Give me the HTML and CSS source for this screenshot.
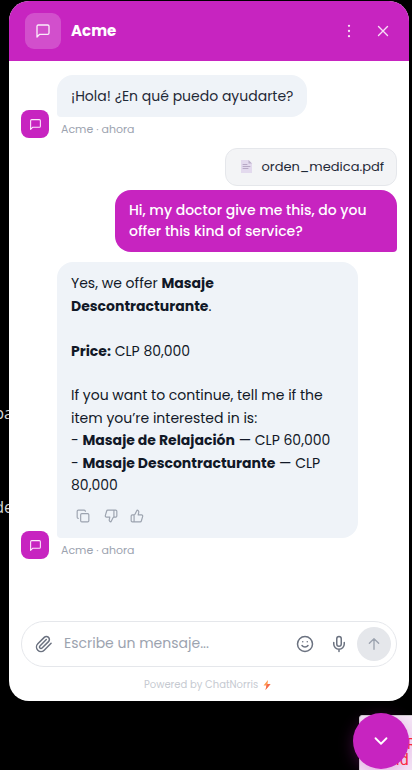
FILE: index.html
```html
<!DOCTYPE html>
<html lang="es">
<head>
<meta charset="utf-8">
<title>Acme</title>
<link rel="stylesheet" href="styles.css">
</head>
<body>
<svg class="defs"><defs>
<symbol id="chat" viewBox="0 0 24 24"><path d="M21 15a2 2 0 0 1-2 2H7l-4 4V5a2 2 0 0 1 2-2h14a2 2 0 0 1 2 2z"/></symbol>
</defs></svg>
<span class="page-text upper">pa</span>
<span class="page-text lower">de</span>
<div class="notice"><span class="n1">R</span><span class="n2">uid</span></div>
<main class="panel">
  <header>
    <div class="logo"><svg class="i16"><use href="#chat"/></svg></div>
    <h1>Acme</h1>
    <svg class="dots" viewBox="0 0 18 18"><circle cx="9" cy="3.8" r="1.15"/><circle cx="9" cy="9" r="1.15"/><circle cx="9" cy="14.2" r="1.15"/></svg>
    <svg class="close" viewBox="0 0 18 18"><path d="M4.5 4.5l9 9M13.5 4.5l-9 9"/></svg>
  </header>
  <section class="messages">
    <div class="row">
      <div class="avatar"><svg><use href="#chat"/></svg></div>
      <div class="stack">
        <div class="bubble hello">¡Hola! ¿En qué puedo ayudarte?</div>
        <div class="meta">Acme · ahora</div>
      </div>
    </div>
    <div class="file">
      <svg viewBox="0 0 12 14"><path fill="#e3daee" d="M0 0h7.5L11 3.5V13H0z"/><path fill="#bcb0ca" d="M7.5 0L11 3.5H7.5z"/><path stroke="#b7a9c5" d="M2 4.5h4M2 6.5h7M2 8.5h5"/></svg>
      <span>orden_medica.pdf</span>
    </div>
    <div class="user">Hi, my doctor give me this, do you<br>offer this kind of service?</div>
    <div class="row answer-row">
      <div class="avatar"><svg><use href="#chat"/></svg></div>
      <div class="stack">
        <div class="bubble answer">
          <p>Yes, we offer <b>Masaje</b></p>
          <p><b>Descontracturante</b>.</p>
          <p>&nbsp;</p>
          <p><b>Price:</b> CLP 80,000</p>
          <p>&nbsp;</p>
          <p>If you want to continue, tell me if the</p>
          <p>item you’re interested in is:</p>
          <p>- <b>Masaje de Relajación</b> — CLP 60,000</p>
          <p>- <b>Masaje Descontracturante</b> — CLP</p>
          <p>80,000</p>
          <div class="actions">
            <svg viewBox="0 0 24 24"><rect x="8" y="8" width="14" height="14" rx="2"/><path d="M4 16c-1.1 0-2-.9-2-2V4c0-1.1.9-2 2-2h10c1.1 0 2 .9 2 2"/></svg>
            <svg class="down" viewBox="0 0 24 24"><path d="M17 14V2M9 18.12 10 14H4.17a2 2 0 0 1-1.92-2.56l2.33-8A2 2 0 0 1 6.5 2H20a2 2 0 0 1 2 2v8a2 2 0 0 1-2 2h-2.76a2 2 0 0 0-1.79 1.11L12 22a3.13 3.13 0 0 1-3-3.88Z"/></svg>
            <svg viewBox="0 0 24 24"><path d="M7 10v12M15 5.88 14 10h5.83a2 2 0 0 1 1.92 2.56l-2.33 8A2 2 0 0 1 17.5 22H4a2 2 0 0 1-2-2v-8a2 2 0 0 1 2-2h2.76a2 2 0 0 0 1.79-1.11L12 2a3.13 3.13 0 0 1 3 3.88Z"/></svg>
          </div>
        </div>
        <div class="meta">Acme · ahora</div>
      </div>
    </div>
  </section>
  <footer>
    <div class="input">
      <svg class="clip" viewBox="0 0 24 24"><path d="m21.44 11.05-9.19 9.19a6 6 0 0 1-8.49-8.49l8.57-8.57A4 4 0 1 1 18 8.84l-8.59 8.57a2 2 0 0 1-2.83-2.83l8.49-8.48"/></svg>
      <span class="placeholder">Escribe un mensaje...</span>
      <svg class="tool smile" viewBox="0 0 24 24"><circle cx="12" cy="12" r="10"/><path d="M8 14s1.5 2 4 2 4-2 4-2M9 9h.01M15 9h.01"/></svg>
      <svg class="tool mic" viewBox="0 0 24 24"><path d="M12 2a3 3 0 0 0-3 3v7a3 3 0 0 0 6 0V5a3 3 0 0 0-3-3ZM19 10v2a7 7 0 0 1-14 0v-2M12 19v3"/></svg>
      <div class="send"><svg viewBox="0 0 24 24"><path d="M12 20V4M5 11l7-7 7 7"/></svg></div>
    </div>
    <div class="powered"><span>Powered by ChatNorris</span><svg viewBox="0 0 8 10"><path fill="#ff9a4d" d="M5 0L.5 5.5h3L2.5 10 7.5 4h-3z"/><path fill="#f4694f" d="M3.5 5.5L2.5 10 7.5 4h-3z"/></svg></div>
  </footer>
</main>
<div class="fab"><svg viewBox="0 0 24 24"><path d="m6 9 6 6 6-6"/></svg></div>
</body>
</html>
```
FILE: styles.css
```css
* { box-sizing: border-box; }
body { margin: 0; height: 770px; background: #000; overflow: hidden; position: relative; padding: 1px 3px 0 9px; font-family: Poppins, Inter, sans-serif; font-size: 14px; color: #111827; }
svg { fill: none; stroke: currentColor; stroke-width: 2; stroke-linecap: round; stroke-linejoin: round; flex: none; display: block; }
.defs { position: absolute; width: 0; height: 0; }
.page-text { position: absolute; right: 399px; color: #d8d8d8; font-family: "Open Sans", sans-serif; font-size: 16px; line-height: 24px; }
.upper { top: 401px; }
.lower { top: 495px; }
.notice { position: absolute; left: 359px; top: 715px; width: 70px; height: 60px; background: #f3e6f5; border-radius: 3px; border: 1px solid #ccc; color: #ff2a30; font: 14px Roboto, sans-serif; }
.n1, .n2 { position: absolute; line-height: 16px; }
.n1 { left: 47px; top: 20px; }
.n2 { left: 27px; top: 36px; font-size: 16px; }
.panel { position: relative; width: 400px; height: 700px; background: #fff; border-radius: 20px; overflow: hidden; display: flex; flex-direction: column; }
header { height: 60px; flex: none; background: #c724c0; color: #fff; display: flex; align-items: center; padding: 0 17px 0 16px; }
.logo { width: 36px; height: 36px; border-radius: 9px; background: rgba(255,255,255,.2); display: grid; place-items: center; }
.i16 { width: 16px; height: 16px; opacity: .9; }
h1 { margin: 0 auto 0 10px; font-size: 15px; line-height: 22px; font-weight: 700; }
.dots { width: 18px; height: 18px; fill: #f8def7; stroke: none; margin-right: 16px; }
.close { width: 18px; height: 18px; color: #f8def7; stroke-width: 1.4; }
.messages { padding: 14px 12px 0; flex: 1; display: flex; flex-direction: column; align-items: flex-start; }
.row { display: flex; align-items: flex-end; gap: 8px; }
.avatar { width: 28px; height: 28px; border-radius: 8px; background: #c724c0; color: #fce9fb; display: grid; place-items: center; }
.avatar svg { width: 13px; height: 13px; }
.bubble { background: #eff3f8; border-radius: 16px 16px 16px 4px; padding: 10px 14px; white-space: nowrap; }
.hello { width: 250px; height: 42px; line-height: 22px; color: #1f2937; }
.meta { margin-top: 4px; height: 17px; line-height: 17px; padding-left: 4px; font-size: 11px; color: #9ca3af; }
.file { align-self: flex-end; margin-top: 10px; width: 172px; height: 38px; background: #f3f4f6; border: 1px solid #e5e7eb; border-radius: 12px; padding: 0 12px 0 15px; display: flex; align-items: center; color: #1f2937; font-size: 13px; white-space: nowrap; }
.file svg { width: 12px; height: 14px; margin-right: 8.5px; stroke-width: 1; stroke: none; }
.user { align-self: flex-end; margin-top: 4px; width: 282px; height: 62px; background: #c724c0; color: #fff; border-radius: 16px 16px 4px 16px; padding: 10px 14px; line-height: 21px; font-weight: 500; white-space: nowrap; }
.answer-row { margin-top: 10px; }
.answer { width: 301px; height: 276px; padding-top: 10.35px; }
.answer p { margin: 0; line-height: 22.4px; }
.actions { display: flex; gap: 13px; padding: 12.65px 0 0 5px; color: #9ca3af; }
.actions svg { width: 14px; height: 14px; }
.actions .down { margin: 0 -1px 0 1px; }
footer { height: 80px; flex: none; padding: 0 12px; }
.input { height: 46px; border: 1px solid #e5e7eb; border-radius: 23px; display: flex; align-items: center; padding: 0 5px 0 13px; color: #6b7280; }
.clip { width: 18px; height: 18px; }
.placeholder { margin: -2px auto 0 11px; color: #9ca3af; font-size: 14px; white-space: nowrap; }
.tool { width: 18px; height: 18px; }
.smile { margin-right: 16px; }
.mic { margin-right: 9px; }
.send { width: 34px; height: 34px; border-radius: 50%; background: #e5e7eb; color: #9ca3af; display: grid; place-items: center; }
.send svg { width: 16px; height: 16px; }
.powered { height: 17px; margin-top: 9px; padding-left: 123px; display: flex; align-items: center; font-size: 10px; color: #c6cad1; white-space: nowrap; }
.powered span { width: 114px; }
.powered svg { width: 8px; height: 10px; stroke: none; margin-left: 5px; }
.fab { position: absolute; left: 353px; top: 713px; width: 56px; height: 56px; border-radius: 50%; background: #c724c0; color: #fff; display: grid; place-items: center; box-shadow: 0 4px 16px rgba(199,36,192,.3); }
.fab svg { width: 22px; height: 22px; }
```
